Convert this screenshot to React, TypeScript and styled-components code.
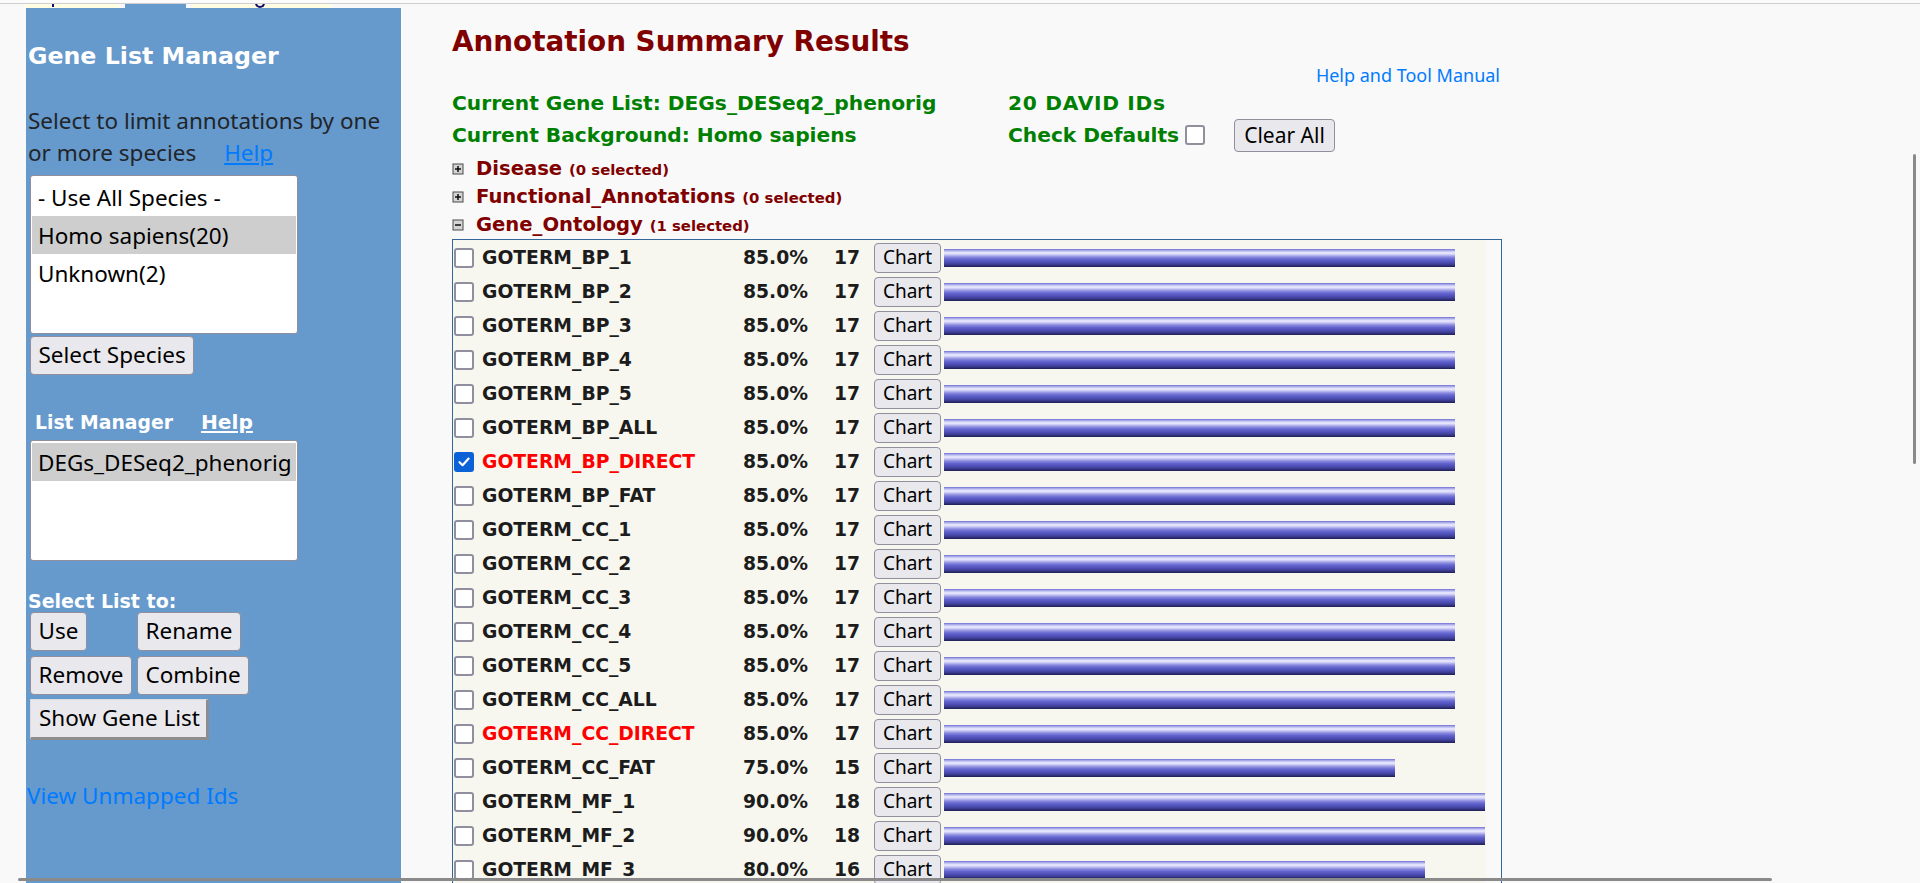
import React from "react";
import styled, { createGlobalStyle } from "styled-components";

const HEAD = `"DejaVu Sans", Verdana, sans-serif`;
const BODY = `"Noto Sans", "Open Sans", sans-serif`;

const GlobalStyle = createGlobalStyle`
  html, body {
    margin: 0;
    padding: 0;
    background: #f9f9f9;
    overflow: hidden;
  }
  body {
    font-family: ${BODY};
    color: #212529;
  }
`;

const Viewport = styled.div`
  min-height: 883px;
  display: flex;
  flex-direction: column;
`;

const BrowserEdge = styled.div`
  height: 3px;
  background: #fbfbfb;
  border-bottom: 1px solid #cfcfd3;
`;

const Page = styled.div`
  flex: 1;
  display: flex;
  align-items: stretch;
`;

const LeftColumn = styled.div`
  margin-left: 25px;
  width: 376px;
  display: flex;
  flex-direction: column;
`;

const TabStrip = styled.div`
  height: 4px;
  display: flex;
  gap: 6px;
`;

const Tab = styled.div<{ $w: number; $active?: boolean }>`
  position: relative;
  width: ${(p) => p.$w}px;
  height: 4px;
  overflow: hidden;
  background: ${(p) => (p.$active ? "#6699cc" : "#fffde2")};
`;

/* the descenders of the scrolled-off tab captions */
const Stem = styled.span<{ $x: number }>`
  position: absolute;
  left: ${(p) => p.$x}px;
  top: 0;
  width: 2px;
  height: 3px;
  background: #10106a;
`;

const Hook = styled.span<{ $x: number }>`
  position: absolute;
  left: ${(p) => p.$x}px;
  top: -4px;
  width: 6px;
  height: 6px;
  border: 2px solid #10106a;
  border-top: none;
  border-radius: 0 0 5px 5px;
`;

const Sidebar = styled.aside`
  flex: 1;
  margin-left: 1px;
  background: #6699cc;
  padding: 0 0 40px 2px;
  display: flex;
  flex-direction: column;
  align-items: flex-start;
`;

const SideTitle = styled.h2`
  margin: 34px 0 0;
  font-family: ${HEAD};
  font-weight: bold;
  font-size: 23.7px;
  line-height: 28px;
  color: #ffffff;
`;

const Intro = styled.p`
  margin: 35px 0 0;
  font-size: 22.5px;
  line-height: 32px;
  color: #212529;
  white-space: nowrap;
`;

const InlineHelp = styled.a`
  margin-left: 28px;
  color: #007bff;
  text-decoration: underline;
`;

const ListBox = styled.div<{ $h: number; $mt: number }>`
  box-sizing: border-box;
  margin: ${(p) => p.$mt}px 0 0 2px;
  width: 268px;
  height: ${(p) => p.$h}px;
  padding: 2px 1px;
  background: #ffffff;
  border: 1px solid #8f8f9d;
  border-radius: 3px;
  overflow: hidden;
`;

const ListOption = styled.div<{ $selected?: boolean }>`
  height: 38px;
  line-height: 40px;
  padding-left: 6px;
  font-size: 22.5px;
  color: #000;
  white-space: nowrap;
  overflow: hidden;
  background: ${(p) => (p.$selected ? "#cecece" : "transparent")};
`;

const Btn = styled.button`
  box-sizing: border-box;
  height: 39px;
  padding: 0 7.5px;
  font-family: ${BODY};
  font-size: 22.5px;
  line-height: 1;
  color: #000;
  background: #e9e9ed;
  border: 1px solid #8f8f9d;
  border-radius: 4px;
  white-space: nowrap;
`;

const SpeciesBtn = styled(Btn)`
  margin: 2px 0 0 2px;
`;

const ListHeader = styled.div`
  margin: 34.5px 0 0 7px;
  font-family: ${HEAD};
  font-weight: bold;
  font-size: 18.8px;
  line-height: 24px;
  color: #ffffff;
  display: flex;
  align-items: baseline;
  gap: 28px;
`;

const WhiteHelp = styled.a`
  font-size: 20.2px;
  color: #ffffff;
  text-decoration: underline;
`;

const SelectTo = styled.div`
  margin: 28.5px 0 0;
  font-family: ${HEAD};
  font-weight: bold;
  font-size: 19px;
  line-height: 22px;
  color: #ffffff;
`;

const ActionGrid = styled.div`
  margin: 0.5px 0 0 2px;
  display: grid;
  grid-template-columns: auto auto;
  column-gap: 5px;
  row-gap: 5px;
  justify-items: start;
`;

const ShowListBtn = styled.button`
  box-sizing: border-box;
  margin: 4px 0 0 2px;
  height: 41px;
  padding: 0 6px 0 8px;
  font-family: ${BODY};
  font-size: 22.5px;
  line-height: 1;
  color: #000;
  background: #e9e9ed;
  border-style: solid;
  border-width: 1px 3px 3px 1px;
  border-color: #dcdce0 #8d8d8d #8d8d8d #dcdce0;
  border-radius: 0;
`;

const UnmappedLink = styled.a`
  margin: 41px 0 0 -1px;
  font-size: 22.5px;
  line-height: 30px;
  color: #007bff;
  text-decoration: none;
`;

const Main = styled.main`
  margin-left: 51px;
  width: 1050px;
  display: flex;
  flex-direction: column;
`;

const PageTitle = styled.h1`
  margin: 21px 0 0;
  font-family: ${HEAD};
  font-weight: bold;
  font-size: 27.8px;
  line-height: 34px;
  color: #800000;
`;

const ManualLink = styled.a`
  align-self: flex-end;
  margin: 4px 2px 0 0;
  font-size: 18px;
  line-height: 24px;
  color: #007bff;
  text-decoration: none;
`;

const InfoGrid = styled.div`
  display: grid;
  grid-template-columns: 556px auto;
  grid-auto-rows: 32px;
  align-items: center;
`;

const InfoText = styled.span<{ $wide?: boolean }>`
  font-family: ${HEAD};
  font-weight: bold;
  font-size: 20.2px;
  letter-spacing: ${(p) => (p.$wide ? "0.7px" : "0")};
  color: #008000;
  white-space: nowrap;
`;

const InfoCell = styled.div`
  display: flex;
  align-items: center;
`;

const ClearBtn = styled.button`
  box-sizing: border-box;
  margin-left: 29px;
  height: 33px;
  padding: 0 9px;
  font-family: ${BODY};
  font-size: 21px;
  line-height: 1;
  color: #000;
  background: #e9e9ed;
  border: 1px solid #8f8f9d;
  border-radius: 4px;
`;

const Box = styled.span<{ $checked?: boolean; $ml?: number }>`
  box-sizing: border-box;
  display: inline-flex;
  align-items: center;
  justify-content: center;
  width: 20px;
  height: 20px;
  margin-left: ${(p) => p.$ml ?? 0}px;
  border-radius: 3px;
  border: 2px solid ${(p) => (p.$checked ? "#0b62d6" : "#8f8f9d")};
  background: ${(p) => (p.$checked ? "#0b62d6" : "#ffffff")};
`;

const Tree = styled.div`
  margin-top: 3.5px;
  display: flex;
  flex-direction: column;
`;

const TreeHead = styled.div`
  height: 28px;
  display: flex;
  align-items: center;
  font-family: ${HEAD};
  font-weight: bold;
  font-size: 19.6px;
  color: #800000;
  white-space: pre;
`;

const Toggle = styled.svg`
  flex: none;
  margin: 0 12px 0 0;
`;

const Selected = styled.span`
  font-size: 14.9px;
  margin-top: 3px;
`;

const TableBox = styled.div`
  box-sizing: border-box;
  width: 1050px;
  border: 1px solid #336699;
`;

const Rows = styled.div`
  width: 1033px;
  padding-top: 1px;
  background: #f7f7ef;
`;

const Row = styled.div`
  height: 34px;
  display: grid;
  grid-template-columns: 29px 261px 67px 64px 70px 1fr;
  align-items: center;
  font-family: ${HEAD};
  font-weight: bold;
  font-size: 18.75px;
  color: #1c1c1c;
  white-space: nowrap;
`;

const CheckCell = styled.div`
  display: flex;
  padding-left: 1px;
`;

const TermName = styled.span<{ $def?: boolean }>`
  color: ${(p) => (p.$def ? "#ff0000" : "#1c1c1c")};
`;

const Count = styled.span`
  padding-left: 24px;
`;

const ChartBtn = styled.button`
  box-sizing: border-box;
  width: 67px;
  height: 30px;
  padding: 0;
  font-family: ${BODY};
  font-size: 19px;
  font-weight: normal;
  line-height: 1;
  color: #000;
  background: #e9e9ed;
  border: 1px solid #8f8f9d;
  border-radius: 4px;
`;

const Bar = styled.div`
  height: 18px;
  background: linear-gradient(
    to bottom,
    #6e6ed4 0%,
    #b4b4ee 10%,
    #eeeeff 22%,
    #c6c6f2 32%,
    #8c8ce0 44%,
    #6464cf 58%,
    #5050b8 72%,
    #3c3c94 86%,
    #1f1f4f 100%
  );
`;

const VScroll = styled.div`
  position: fixed;
  left: 1913px;
  top: 154px;
  width: 3px;
  height: 310px;
  border-radius: 2px;
  background: #8a8a8a;
`;

const HScroll = styled.div`
  position: fixed;
  left: 18px;
  top: 878px;
  width: 1754px;
  height: 3px;
  border-radius: 2px;
  background: #8a8a8a;
`;

type Term = { name: string; pct: number; count: number; def?: boolean; checked?: boolean };

const terms: Term[] = [
  { name: "GOTERM_BP_1", pct: 85, count: 17 },
  { name: "GOTERM_BP_2", pct: 85, count: 17 },
  { name: "GOTERM_BP_3", pct: 85, count: 17 },
  { name: "GOTERM_BP_4", pct: 85, count: 17 },
  { name: "GOTERM_BP_5", pct: 85, count: 17 },
  { name: "GOTERM_BP_ALL", pct: 85, count: 17 },
  { name: "GOTERM_BP_DIRECT", pct: 85, count: 17, def: true, checked: true },
  { name: "GOTERM_BP_FAT", pct: 85, count: 17 },
  { name: "GOTERM_CC_1", pct: 85, count: 17 },
  { name: "GOTERM_CC_2", pct: 85, count: 17 },
  { name: "GOTERM_CC_3", pct: 85, count: 17 },
  { name: "GOTERM_CC_4", pct: 85, count: 17 },
  { name: "GOTERM_CC_5", pct: 85, count: 17 },
  { name: "GOTERM_CC_ALL", pct: 85, count: 17 },
  { name: "GOTERM_CC_DIRECT", pct: 85, count: 17, def: true },
  { name: "GOTERM_CC_FAT", pct: 75, count: 15 },
  { name: "GOTERM_MF_1", pct: 90, count: 18 },
  { name: "GOTERM_MF_2", pct: 90, count: 18 },
  { name: "GOTERM_MF_3", pct: 80, count: 16 },
];

const CheckBox = ({ checked, ml }: { checked?: boolean; ml?: number }) => (
  <Box $checked={checked} $ml={ml} role="checkbox" aria-checked={!!checked}>
    {checked && (
      <svg width="14" height="14" viewBox="0 0 14 14">
        <path d="M2.5 7.2 L5.6 10.2 L11.6 3.6" fill="none" stroke="#fff" strokeWidth="2.2" strokeLinecap="round" strokeLinejoin="round" />
      </svg>
    )}
  </Box>
);

const ToggleIcon = ({ open }: { open?: boolean }) => (
  <Toggle width="12" height="12" viewBox="0 0 12 12">
    <rect x="0.5" y="0.5" width="11" height="11" fill="#4a4a4a" />
    <rect x="1.5" y="1.5" width="9" height="9" fill="#d4d4d4" />
    <path d="M3 6 H9" stroke="#000" strokeWidth="1.4" />
    {!open && <path d="M6 3 V9" stroke="#000" strokeWidth="1.4" />}
  </Toggle>
);

export default function App() {
  return (
    <Viewport>
      <GlobalStyle />
      <BrowserEdge />
      <Page>
        <LeftColumn>
          <TabStrip aria-hidden="true">
            <Tab $w={94}>
              <Stem $x={27} />
            </Tab>
            <Tab $w={61} $active />
            <Tab $w={139}>
              <Hook $x={63} />
            </Tab>
          </TabStrip>
          <Sidebar>
            <SideTitle>Gene List Manager</SideTitle>
            <Intro>
              Select to limit annotations by one
              <br />
              or more species
              <InlineHelp href="#">Help</InlineHelp>
            </Intro>
            <ListBox $h={159} $mt={6}>
              <ListOption>- Use All Species -</ListOption>
              <ListOption $selected>Homo sapiens(20)</ListOption>
              <ListOption>Unknown(2)</ListOption>
            </ListBox>
            <SpeciesBtn>Select Species</SpeciesBtn>
            <ListHeader>
              <span>List Manager</span>
              <WhiteHelp href="#">Help</WhiteHelp>
            </ListHeader>
            <ListBox $h={121} $mt={5.5}>
              <ListOption $selected>DEGs_DESeq2_phenorig</ListOption>
            </ListBox>
            <SelectTo>Select List to:</SelectTo>
            <ActionGrid>
              <Btn>Use</Btn>
              <Btn>Rename</Btn>
              <Btn>Remove</Btn>
              <Btn>Combine</Btn>
            </ActionGrid>
            <ShowListBtn>Show Gene List</ShowListBtn>
            <UnmappedLink href="#">View Unmapped Ids</UnmappedLink>
          </Sidebar>
        </LeftColumn>
        <Main>
          <PageTitle>Annotation Summary Results</PageTitle>
          <ManualLink href="#">Help and Tool Manual</ManualLink>
          <InfoGrid>
            <InfoText>Current Gene List: DEGs_DESeq2_phenorig</InfoText>
            <InfoText $wide>20 DAVID IDs</InfoText>
            <InfoText>Current Background: Homo sapiens</InfoText>
            <InfoCell>
              <InfoText>Check Defaults</InfoText>
              <CheckBox ml={6} />
              <ClearBtn>Clear All</ClearBtn>
            </InfoCell>
          </InfoGrid>
          <Tree>
            <TreeHead>
              <ToggleIcon />
              Disease <Selected>(0 selected)</Selected>
            </TreeHead>
            <TreeHead>
              <ToggleIcon />
              Functional_Annotations <Selected>(0 selected)</Selected>
            </TreeHead>
            <TreeHead>
              <ToggleIcon open />
              Gene_Ontology <Selected>(1 selected)</Selected>
            </TreeHead>
          </Tree>
          <TableBox>
            <Rows>
              {terms.map((t) => (
                <Row key={t.name}>
                  <CheckCell>
                    <CheckBox checked={t.checked} />
                  </CheckCell>
                  <TermName $def={t.def}>{t.name}</TermName>
                  <span>{t.pct.toFixed(1)}%</span>
                  <Count>{t.count}</Count>
                  <ChartBtn>Chart</ChartBtn>
                  <div>
                    <Bar style={{ width: Math.round(t.pct * 6.015) }} />
                  </div>
                </Row>
              ))}
            </Rows>
          </TableBox>
        </Main>
      </Page>
      <VScroll />
      <HScroll />
    </Viewport>
  );
}
